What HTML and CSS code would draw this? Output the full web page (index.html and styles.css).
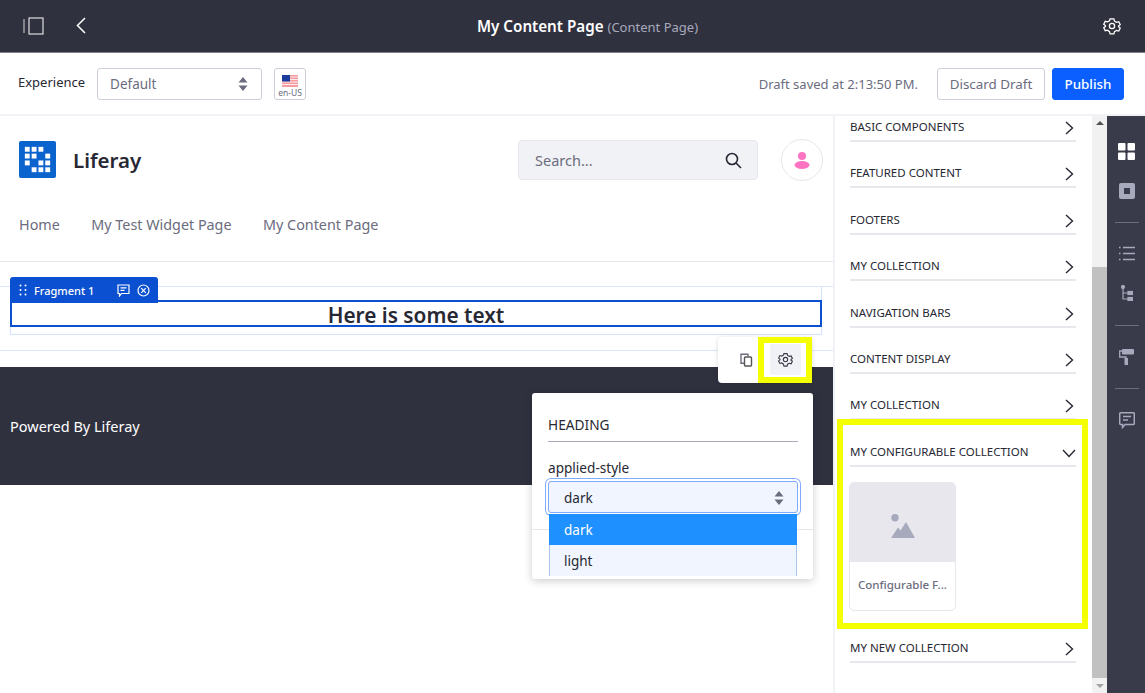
FILE: index.html
```html
<!DOCTYPE html>
<html lang="en">
<head>
  <meta charset="UTF-8">
  <meta name="viewport" content="width=device-width, initial-scale=1.0">
  <title>My Content Page</title>
  <link rel="stylesheet" href="styles.css">
</head>
<body>
  <!-- Top bar -->
  <header class="topbar">
    <div class="topbarLeft">
      <svg class="icon" width="22" height="18" viewBox="0 0 22 18" fill="none" stroke="#fff" stroke-width="1.2"><path d="M1 2v14" stroke="#bbb"/><rect x="6" y="1" width="14" height="16" stroke="#ddd"/></svg>
      <svg class="icon backIcon" width="10" height="17" viewBox="0 0 10 17" fill="none" stroke="#fff" stroke-width="1.5"><path d="M9 1 1.500 8.500 9 16"/></svg>
    </div>
    <div class="pageTitle"><strong>My Content Page</strong> <span>(Content Page)</span></div>
    <svg class="icon gearTop" width="18" height="18" viewBox="0 0 24 24" fill="none" stroke="#fff" stroke-width="1.7"><path d="M9.5 2.5h5l.8 3 2.7 1.5 3-.8 2 4-2.2 1.8v1l2.2 1.8-2 4-3-.8-2.7 1.5-.8 3h-5l-.8-3L6 17.500l-3 .8-2-4L3.200 12.500v-1L1 9.700l2-4 3 .8 2.700-1.500z"/><circle cx="12" cy="12" r="3.500"/></svg>
  </header>

  <!-- Toolbar -->
  <div class="toolbar">
    <span class="expLabel">Experience</span>
    <div class="expSelect">
      <span>Default</span>
      <svg width="10" height="14" viewBox="0 0 10 14" fill="#6b6c7e"><path d="M5 0l4.500 5.500h-9zM5 14 .5 8.500h9z"/></svg>
    </div>
    <div class="langBtn">
      <svg width="16" height="12" viewBox="0 0 16 12"><rect width="16" height="12" fill="#f49ca0"/><path d="M0 2h16M0 4.500h16M0 7h16M0 9.500h16" stroke="#fff" stroke-width=".8"/><rect width="8" height="6.500" fill="#1c3d9c"/></svg>
      <span>en-US</span>
    </div>
    <span class="draftNote">Draft saved at 2:13:50 PM.</span>
    <button class="btn btnSecondary">Discard Draft</button>
    <button class="btn btnPrimary">Publish</button>
  </div>

  <div class="workspace">
    <!-- Page preview -->
    <main class="preview">
      <div class="siteHeader">
        <svg class="logo" width="37" height="37" viewBox="0 0 38 38"><rect width="38" height="38" rx="2" fill="#0b63ce"/><g fill="#fff"><rect x="6" y="6" width="5" height="5"/><rect x="13" y="6" width="5" height="5"/><rect x="20" y="6" width="5" height="5"/><rect x="6" y="13" width="5" height="5"/><rect x="13" y="13" width="5" height="5"/><rect x="27" y="13" width="5" height="5"/><rect x="6" y="20" width="5" height="5"/><rect x="20" y="20" width="5" height="5"/><rect x="27" y="20" width="5" height="5"/><rect x="13" y="27" width="5" height="5"/><rect x="20" y="27" width="5" height="5"/><rect x="27" y="27" width="5" height="5"/></g></svg>
        <span class="siteName">Liferay</span>
        <div class="searchBox">
          <span>Search...</span>
          <svg width="17" height="17" viewBox="0 0 17 17" fill="none" stroke="#272833" stroke-width="1.600"><circle cx="7" cy="7" r="5.500"/><path d="m11 11 5 5"/></svg>
        </div>
        <div class="avatar">
          <svg width="16" height="18" viewBox="0 0 16 18" fill="#ff73c3"><circle cx="8" cy="5" r="4"/><ellipse cx="8" cy="14" rx="7.500" ry="4"/></svg>
        </div>
      </div>
      <nav class="siteNav">
        <a>Home</a>
        <a>My Test Widget Page</a>
        <a>My Content Page</a>
      </nav>
      <section class="dropZone">
        <div class="fragmentWrap">
          <div class="fragmentOuter">
            <div class="fragmentText">Here is some text</div>
          </div>
        </div>
      </section>
      <footer class="siteFooter">Powered By Liferay</footer>

      <div class="topper">
        <svg width="8" height="12" viewBox="0 0 8 12" fill="#fff"><circle cx="1.500" cy="1.500" r="1"/><circle cx="6.500" cy="1.500" r="1"/><circle cx="1.500" cy="6" r="1"/><circle cx="6.500" cy="6" r="1"/><circle cx="1.500" cy="10.500" r="1"/><circle cx="6.500" cy="10.500" r="1"/></svg>
        <span class="topperName">Fragment 1</span>
        <svg width="13" height="13" viewBox="0 0 13 13" fill="none" stroke="#fff" stroke-width="1.200"><path d="M1 1h11v8.500H4.500L2.500 12V9.500H1z"/><path d="M3.500 3.800h6M3.500 6.300h4"/></svg>
        <svg width="13" height="13" viewBox="0 0 13 13" fill="none" stroke="#fff" stroke-width="1.200"><circle cx="6.500" cy="6.500" r="5.500"/><path d="m4.200 4.200 4.600 4.600m0-4.600L4.200 8.800"/></svg>
      </div>

      <div class="floatTools">
        <svg class="copyIcon" width="13" height="14" viewBox="0 0 13 14" fill="none" stroke="#6b6c7e" stroke-width="1.400"><path d="M8 3V1.200H1v9h3"/><rect x="4.500" y="4" width="7" height="9" rx="1" fill="#fff" stroke="#555"/></svg>
        <div class="gearHighlight">
          <div class="gearBtn">
            <svg width="15" height="15" viewBox="0 0 24 24" fill="none" stroke="#393a4a" stroke-width="1.800"><path d="M9.500 2.500h5l.8 3 2.700 1.500 3-.8 2 4-2.200 1.800v1l2.200 1.800-2 4-3-.8-2.700 1.500-.8 3h-5l-.8-3L6 17.500l-3 .8-2-4 2.200-1.800v-1L1 9.700l2-4 3 .8 2.700-1.500z"/><circle cx="12" cy="12" r="3.500"/></svg>
          </div>
        </div>
      </div>

      <div class="stylePopover">
        <div class="popDivider"></div>
        <div class="popTitle">HEADING</div>
        <label class="popLabel">applied-style</label>
        <div class="popSelect">
          <span>dark</span>
          <svg width="10" height="14" viewBox="0 0 10 14" fill="#6b6c7e"><path d="M5 0l4.500 5.500h-9zM5 14 .5 8.500h9z"/></svg>
        </div>
        <div class="popOptionActive">dark</div>
        <div class="popOption">light</div>
      </div>
    </main>

    <!-- Fragments panel -->
    <aside class="panel">
      <div class="panelRow firstRow"><span>BASIC COMPONENTS</span><svg class="chev" width="9" height="14" viewBox="0 0 9 14" fill="none" stroke="#272833" stroke-width="1.400"><path d="m1 1 6.500 6L1 13"/></svg></div>
      <div class="panelRow"><span>FEATURED CONTENT</span><svg class="chev" width="9" height="14" viewBox="0 0 9 14" fill="none" stroke="#272833" stroke-width="1.400"><path d="m1 1 6.500 6L1 13"/></svg></div>
      <div class="panelRow"><span>FOOTERS</span><svg class="chev" width="9" height="14" viewBox="0 0 9 14" fill="none" stroke="#272833" stroke-width="1.400"><path d="m1 1 6.500 6L1 13"/></svg></div>
      <div class="panelRow"><span>MY COLLECTION</span><svg class="chev" width="9" height="14" viewBox="0 0 9 14" fill="none" stroke="#272833" stroke-width="1.400"><path d="m1 1 6.500 6L1 13"/></svg></div>
      <div class="panelRow"><span>NAVIGATION BARS</span><svg class="chev" width="9" height="14" viewBox="0 0 9 14" fill="none" stroke="#272833" stroke-width="1.400"><path d="m1 1 6.500 6L1 13"/></svg></div>
      <div class="panelRow"><span>CONTENT DISPLAY</span><svg class="chev" width="9" height="14" viewBox="0 0 9 14" fill="none" stroke="#272833" stroke-width="1.400"><path d="m1 1 6.500 6L1 13"/></svg></div>
      <div class="panelRow"><span>MY COLLECTION</span><svg class="chev" width="9" height="14" viewBox="0 0 9 14" fill="none" stroke="#272833" stroke-width="1.400"><path d="m1 1 6.500 6L1 13"/></svg></div>
      <div class="panelRow"><span>MY CONFIGURABLE COLLECTION</span><svg class="chevDown" width="14" height="9" viewBox="0 0 14 9" fill="none" stroke="#272833" stroke-width="1.400"><path d="m1 1 6 6.500L13 1"/></svg></div>
      <div class="card">
        <div class="cardImage">
          <svg width="24" height="24" viewBox="0 0 24 24" fill="#a7a9bc"><circle cx="4" cy="3.800" r="3.700"/><path d="M0 24 7 13.500l2.500 3L15 8l9 16z"/></svg>
        </div>
        <div class="cardName">Configurable F...</div>
      </div>
      <div class="panelRow lastRow"><span>MY NEW COLLECTION</span><svg class="chev" width="9" height="14" viewBox="0 0 9 14" fill="none" stroke="#272833" stroke-width="1.400"><path d="m1 1 6.500 6L1 13"/></svg></div>
      <div class="collectionHighlight"></div>
    </aside>

    <div class="scrollTrack">
      <div class="scrollArrow arrowUp"></div>
      <div class="scrollThumb"></div>
      <div class="scrollArrow arrowDown"></div>
    </div>

    <!-- Right rail -->
    <div class="rail">
      <svg width="17" height="17" viewBox="0 0 17 17" fill="#fff"><rect width="7.500" height="7.500" rx="1"/><rect x="9.500" width="7.500" height="7.500" rx="1"/><rect y="9.500" width="7.500" height="7.500" rx="1"/><rect x="9.500" y="9.500" width="7.500" height="7.500" rx="1"/></svg>
      <svg width="16" height="16" viewBox="0 0 16 16"><rect width="16" height="16" rx="2" fill="#a7a9bc"/><rect x="5" y="5" width="6" height="6" fill="#393a4a"/></svg>
      <div class="railSep"></div>
      <svg class="railWide" width="16" height="15" viewBox="0 0 16 15" fill="none" stroke="#a7a9bc" stroke-width="1.500"><path d="M4 1.500h12M4 7.500h12M4 13.500h12M0 1.500h1.500M0 7.500h1.500M0 13.500h1.500"/></svg>
      <svg class="railWide" width="12" height="16" viewBox="0 0 12 16" fill="none" stroke="#a7a9bc" stroke-width="1.200"><circle cx="2" cy="2" r="1.500" fill="#a7a9bc"/><path d="M2 3v11h6M2 8h6"/><rect x="7" y="6.500" width="4.500" height="3" fill="#a7a9bc"/><rect x="7" y="12.500" width="4.500" height="3" fill="#a7a9bc"/></svg>
      <div class="railSep"></div>
      <svg width="15" height="16" viewBox="0 0 15 16" fill="#a7a9bc"><rect x="3" width="12" height="5.500" rx="1"/><path d="M3 2H.7v6H7v2" fill="none" stroke="#a7a9bc" stroke-width="1.300"/><rect x="5.500" y="9" width="3.500" height="7"/></svg>
      <div class="railSep"></div>
      <svg width="16" height="17" viewBox="0 0 16 17" fill="none" stroke="#a7a9bc" stroke-width="1.500"><path d="M1.500.8h13a.8.8 0 0 1 .8.8v10a.8.8 0 0 1-.8.8H6l-2.500 3v-3h-2a.8.8 0 0 1-.8-.8v-10a.8.8 0 0 1 .8-.8z"/><path d="M4 4.500h8M4 8h5"/></svg>
    </div>
  </div>
</body>
</html>
```

FILE: styles.css
```css
* {
  box-sizing: border-box;
}
html, body {
  height: 100%;
}
body {
  font-family: "Noto Sans", Arial, sans-serif;
  margin: 0;
  background-color: #fff;
  color: #272833;
  overflow: hidden;
  display: flex;
  flex-direction: column;
}
svg {
  display: block;
  flex: none;
}

/* top bar */
.topbar {
  height: 53px;
  flex: none;
  background-color: #30313f;
  border-bottom: 1px solid #82838f;
  display: flex;
  align-items: center;
  position: relative;
  padding: 0 24px 1px 23px;
}
.topbarLeft {
  display: flex;
  align-items: center;
  gap: 31px;
}
.pageTitle {
  flex: 1;
  text-align: center;
  color: #fff;
  font-size: 15.2px;
  padding-right: 14px;
}
.pageTitle strong {
  font-weight: 600;
}
.pageTitle span {
  color: #a7a9bc;
  font-size: 13px;
}

/* experience toolbar */
.toolbar {
  height: 63px;
  flex: none;
  background-color: #fff;
  border-bottom: 2px solid #f1f2f5;
  display: flex;
  align-items: center;
  padding: 0 21px 0 18px;
}
.expLabel {
  font-size: 13px;
  margin-right: 12px;
  margin-top: -4px;
}
.expSelect {
  width: 165px;
  height: 32px;
  border: 1px solid #cdced9;
  border-radius: 3px;
  display: flex;
  align-items: center;
  justify-content: space-between;
  padding: 0 13px 0 12px;
  font-size: 13.5px;
  color: #6b6c7e;
}
.langBtn {
  width: 32px;
  height: 32px;
  margin-left: 12px;
  border: 1px solid #cdced9;
  border-radius: 3px;
  display: flex;
  flex-direction: column;
  align-items: center;
  padding-top: 6px;
  color: #6b6c7e;
  font-size: 8.5px;
  line-height: 11px;
}
.draftNote {
  margin-left: auto;
  margin-right: 19px;
  font-size: 13px;
  color: #6b6c7e;
}
.btn {
  height: 32px;
  border-radius: 3px;
  font-family: inherit;
  font-size: 13.4px;
  padding: 0;
  cursor: pointer;
}
.btnSecondary {
  width: 108px;
  background-color: #fff;
  border: 1px solid #cdced9;
  color: #6b6c7e;
}
.btnPrimary {
  width: 72px;
  margin-left: 7px;
  background-color: #0b5fff;
  border: 1px solid #0b5fff;
  color: #fff;
  font-weight: 500;
}

/* main area */
.workspace {
  flex: 1;
  display: flex;
  min-height: 0;
}
.preview {
  width: 835px;
  flex: none;
  position: relative;
  background-color: #fff;
  border-right: 2px solid #f1f2f5;
}
.siteHeader {
  height: 88px;
  display: flex;
  align-items: center;
  padding: 0 10px 0 19px;
}
.logo {
  margin-top: -2px;
}
.siteName {
  font-size: 20.5px;
  font-weight: 600;
  margin-left: 17px;
  margin-top: -1px;
}
.searchBox {
  width: 240px;
  height: 40px;
  margin-left: auto;
  background-color: #f1f2f5;
  border: 1px solid #e7e7ed;
  border-radius: 4px;
  display: flex;
  align-items: center;
  justify-content: space-between;
  padding: 0 15px 0 16px;
  color: #6b6c7e;
  font-size: 14.5px;
}
.avatar {
  width: 42px;
  height: 42px;
  margin-left: 23px;
  border: 1px solid #e7e7ed;
  border-radius: 50%;
  display: flex;
  align-items: center;
  justify-content: center;
}
.siteNav {
  height: 58px;
  display: flex;
  align-items: center;
  gap: 31.5px;
  padding: 0 19px 17px;
  border-bottom: 1px solid #e7e7ed;
  font-size: 14.35px;
  color: #6b6c7e;
}
.dropZone {
  height: 105px;
  padding: 24px 0 0;
}
.fragmentWrap {
  height: 65px;
  border-top: 1px solid #dbe6ff;
  border-bottom: 1px solid #dbe6ff;
}
.fragmentOuter {
  margin: 0 11px 0 10px;
  height: 48px;
  border: 1px solid #d5e2ff;
  border-top: none;
}
.fragmentText {
  height: 27px;
  margin: 0 -1px;
  position: relative;
  top: 13px;
  border: 2px solid #0b50d0;
  text-align: center;
  font-size: 20.8px;
  font-weight: 600;
  line-height: 26px;
  background-color: #fff;
}
.siteFooter {
  height: 118px;
  background-color: #30313f;
  color: #fff;
  display: flex;
  align-items: center;
  padding-left: 10px;
  font-size: 14.500px;
}

/* fragment topper */
.topper {
  position: absolute;
  left: 10px;
  top: 161px;
  width: 148px;
  height: 26px;
  background-color: #0b50d0;
  border-radius: 3px 3px 0 0;
  display: flex;
  align-items: center;
  padding: 0 9px;
  color: #fff;
  font-size: 11px;
  font-weight: 500;
}
.topperName {
  margin-left: 7px;
  margin-right: 23px;
  width: 60px;
  white-space: nowrap;
}
.topper svg:last-child {
  margin-left: 7px;
}

/* floating toolbar with gear */
.floatTools {
  position: absolute;
  left: 718px;
  top: 221px;
  width: 94px;
  height: 46px;
  background-color: #fff;
  border-radius: 4px;
  box-shadow: 0 1px 5px rgba(0,0,0,0.15);
  display: flex;
  align-items: center;
}
.copyIcon {
  margin-left: 22px;
}
.gearHighlight {
  position: absolute;
  right: 0;
  top: 0;
  width: 54px;
  height: 46px;
  border: 6px solid #f4ff00;
  background-color: #fff;
}
.gearBtn {
  width: 31px;
  height: 31px;
  margin: 1px 0 0 6px;
  background-color: #f1f2f5;
  border-radius: 2px;
  display: flex;
  align-items: center;
  justify-content: center;
}

/* style popover */
.stylePopover {
  position: absolute;
  left: 532px;
  top: 277px;
  width: 281px;
  height: 186px;
  background-color: #fff;
  border-radius: 3px;
  box-shadow: 0 2px 8px rgba(0,0,0,0.2);
  padding: 22px 15px 0 16px;
  overflow: hidden;
  font-size: 13.5px;
}
.popDivider {
  position: absolute;
  left: 0;
  right: 0;
  top: 136px;
  height: 1px;
  background-color: #e7e7ed;
}
.popTitle {
  height: 27px;
  border-bottom: 1px solid #a7a9bc;
  line-height: 20px;
  font-size: 13.7px;
}
.popLabel {
  display: block;
  margin-top: 16px;
  font-size: 13.6px;
  line-height: 20px;
}
.popSelect {
  position: relative;
  height: 32px;
  margin-top: 3px;
  background-color: #f0f5ff;
  border: 1px solid #80acff;
  border-radius: 3px;
  box-shadow: 0 0 0 2px #fff, 0 0 0 3px #80acff;
  display: flex;
  align-items: center;
  justify-content: space-between;
  padding: 1px 13px 0 15px;
}
.popOptionActive {
  position: relative;
  height: 31px;
  margin: 1px 1px 0;
  padding: 1px 0 0 15px;
  line-height: 31px;
  background-color: #1e90ff;
  color: #fff;
}
.popOption {
  position: relative;
  height: 31px;
  margin: 0 1px;
  padding: 1px 0 0 14px;
  line-height: 31px;
  background-color: #f0f5ff;
  border-left: 1px solid #a9c4ea;
  border-right: 1px solid #a9c4ea;
}

/* fragments panel */
.panel {
  width: 257px;
  flex: none;
  position: relative;
  padding: 0 16px 0 15px;
  overflow: hidden;
  background-color: #fff;
}
.panelRow {
  height: 26px;
  margin-top: 20.400px;
  border-bottom: 2px solid #e7e7ed;
  display: flex;
  align-items: flex-start;
  justify-content: space-between;
  padding-right: 2px;
  font-size: 11.5px;
  line-height: 21px;
  white-space: nowrap;
}
.firstRow {
  margin-top: 0;
}
.panelRow .chev {
  margin-top: 5px;
}
.panelRow .chevDown {
  margin-top: 8px;
  margin-right: -2px;
}
.lastRow {
  margin-top: 26px;
}
.card {
  width: 107px;
  height: 129px;
  margin: 15px 0 0 -1px;
  border: 1px solid #e7e7ed;
  border-radius: 5px;
  overflow: hidden;
}
.cardImage {
  height: 80px;
  margin: -1px -1px 0;
  padding-top: 8px;
  background-color: #e7e7ed;
  display: flex;
  align-items: center;
  justify-content: center;
}
.cardName {
  padding: 15px 0 0 8px;
  font-size: 11.500px;
  line-height: 16px;
  font-weight: 500;
  color: #6b6c7e;
  white-space: nowrap;
}
.collectionHighlight {
  position: absolute;
  left: 2px;
  top: 303px;
  width: 251px;
  height: 210px;
  border: 6px solid #f4ff00;
  pointer-events: none;
}

/* scrollbar */
.scrollTrack {
  width: 15px;
  flex: none;
  background-color: #f1f1f1;
  display: flex;
  flex-direction: column;
}
.scrollArrow {
  height: 15px;
  flex: none;
  position: relative;
}
.arrowUp::after,
.arrowDown::after {
  content: "";
  position: absolute;
  left: 4px;
  border-left: 4px solid transparent;
  border-right: 4px solid transparent;
}
.arrowUp::after {
  top: 5px;
  border-bottom: 4px solid #505050;
}
.arrowDown::after {
  top: 6px;
  border-top: 4px solid #a3a3a3;
}
.scrollThumb {
  height: 411px;
  margin-top: 136px;
  background-color: #c1c1c1;
}

/* right rail */
.rail {
  flex: 1;
  background-color: #393a4a;
  display: flex;
  flex-direction: column;
  align-items: center;
  padding: 27px 0 0 1px;
}
.rail svg {
  margin-bottom: 23px;
}
.rail .railWide {
  margin-bottom: 24px;
}
.railSep {
  width: 24px;
  height: 1px;
  background-color: #6b6c7e;
  margin-bottom: 23px;
}
```
